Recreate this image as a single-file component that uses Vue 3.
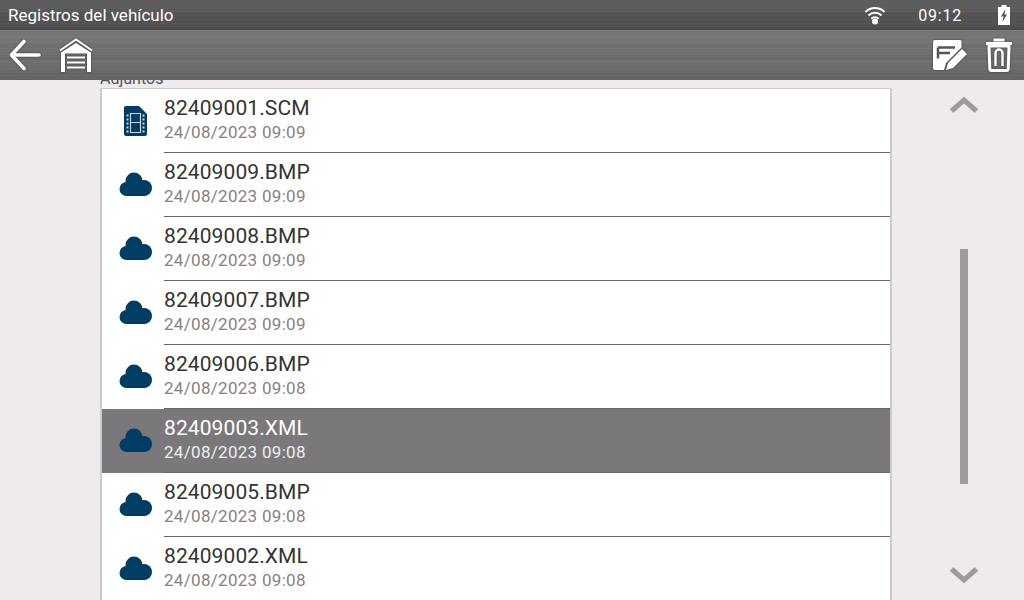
<template>
  <div class="screen">
    <header class="top">
      <div class="status" :style="{ backgroundImage: brushed(30, 0x60, 0x4c, 7) }">
        <span class="title">Registros del vehículo</span>
        <svg class="wifi" width="22" height="20" viewBox="0 0 22 20">
          <path d="M1.500 7a13.500 13.500 0 0 1 19 0M4.500 10.500a9.200 9.200 0 0 1 13 0M7.300 13.700a5.200 5.200 0 0 1 7.400 0" fill="none" stroke="#fff" stroke-width="2" />
          <circle cx="11" cy="16.500" r="3" fill="#fff" />
        </svg>
        <span class="clock">09:12</span>
        <svg class="battery" width="12" height="20" viewBox="0 0 12 20">
          <path d="M3.500 0h5v2H12v18H0V2h3.500z" fill="#fff" />
          <path d="M7.500 4 3 11.500h2.600L4.500 17 9 9.500H6.400z" fill="#555" />
        </svg>
      </div>
      <div class="toolbar" :style="{ backgroundImage: brushed(50, 0x78, 0x66, 13) }">
        <button class="tool back">
          <svg width="36" height="34" viewBox="0 0 36 34">
            <path d="M17 3.500 4.500 17 17 30.500M4.500 17H32" fill="none" stroke="#fff" stroke-width="3.600" stroke-linecap="round" stroke-linejoin="round" />
          </svg>
        </button>
        <button class="tool">
          <svg width="34" height="34" viewBox="0 0 34 34">
            <path d="M1 12.500 17 1.500l16 11" fill="none" stroke="#fff" stroke-width="2" />
            <path d="M2 34V14.500L17 5l15 9.500V34h-4V15.500H6V34z" fill="#fff" />
            <path d="M8 18.500h18v2H8zM8 23.500h18v2H8zM8 28.500h18v2H8z" fill="#fff" />
          </svg>
        </button>
        <span class="spacer"></span>
        <button class="tool note">
          <svg width="36" height="34" viewBox="0 0 36 34">
            <path d="M3 2h25a1.500 1.500 0 0 1 1.500 1.500v6L14 25l-2 7H3a2 2 0 0 1-2-2V4a2 2 0 0 1 2-2z" fill="#fff" />
            <path d="M6 9.500h17M6 9.500v11M6 15h12" fill="none" stroke="#555" stroke-width="2.500" />
            <path d="M16 25 30 11l5 5-14 14-7 2z" fill="#fff" />
          </svg>
        </button>
        <button class="tool trash">
          <svg width="28" height="34" viewBox="0 0 28 34">
            <path d="M8.500 2h11M1 5.500h26" fill="none" stroke="#fff" stroke-width="3" />
            <path d="M4 8h20l-.8 22.500a2 2 0 0 1-2 2H6.800a2 2 0 0 1-2-2z" fill="none" stroke="#fff" stroke-width="3" />
            <path d="M10.500 28V15a3.500 3.500 0 0 1 7 0v13" fill="none" stroke="#fff" stroke-width="2.400" />
          </svg>
        </button>
      </div>
    </header>

    <main class="content">
      <section class="attachments">
        <div class="caption">Adjuntos</div>
        <ul class="files">
          <li v-for="file in files" :key="file.name" class="file" :class="{ selected: file.selected }">
            <div class="icon">
              <svg v-if="file.type === 'film'" class="film" width="23" height="30" viewBox="0 0 23 30">
                <path fill="#003c64" d="M2 0h13l8 8v20a2 2 0 0 1-2 2H2a2 2 0 0 1-2-2V2a2 2 0 0 1 2-2z" />
                <path d="M6.500 7v20M16.500 7v20M6.500 7.500h10M6.500 16.500h10M6.500 26.500h10" fill="none" stroke="#c8d6e0" stroke-width="1.200" />
                <path d="M2.500 8.500h2v2h-2zM2.500 12.500h2v2h-2zM2.500 16.500h2v2h-2zM2.500 20.500h2v2h-2zM2.500 24.500h2v2h-2zM18.500 8.500h2v2h-2zM18.500 12.500h2v2h-2zM18.500 16.500h2v2h-2zM18.500 20.500h2v2h-2zM18.500 24.500h2v2h-2z" fill="#c8d6e0" />
              </svg>
              <svg v-else width="33" height="25" viewBox="0 0 33 25" fill="#003c64">
                <circle cx="7.500" cy="17" r="7" />
                <circle cx="15" cy="9" r="8.500" />
                <circle cx="25" cy="16" r="8" />
                <rect x="7" y="12" width="18" height="12" />
              </svg>
            </div>
            <div class="text">
              <div class="name">{{ file.name }}</div>
              <div class="date">{{ file.date }}</div>
            </div>
          </li>
        </ul>
      </section>
      <aside class="scroller">
        <svg class="arrow" width="30" height="18" viewBox="0 0 30 18">
          <path d="M2.500 15 15 4l12.500 11" fill="none" stroke="#9e9a9e" stroke-width="5" />
        </svg>
        <div class="track"><div class="thumb"></div></div>
        <svg class="arrow" width="30" height="18" viewBox="0 0 30 18">
          <path d="M2.500 3 15 14l12.500-11" fill="none" stroke="#9e9a9e" stroke-width="5" />
        </svg>
      </aside>
    </main>
  </div>
</template>

<script setup>
const files = [
  { name: '82409001.SCM', date: '24/08/2023 09:09', type: 'film' },
  { name: '82409009.BMP', date: '24/08/2023 09:09', type: 'cloud' },
  { name: '82409008.BMP', date: '24/08/2023 09:09', type: 'cloud' },
  { name: '82409007.BMP', date: '24/08/2023 09:09', type: 'cloud' },
  { name: '82409006.BMP', date: '24/08/2023 09:08', type: 'cloud' },
  { name: '82409003.XML', date: '24/08/2023 09:08', type: 'cloud', selected: true },
  { name: '82409005.BMP', date: '24/08/2023 09:08', type: 'cloud' },
  { name: '82409002.XML', date: '24/08/2023 09:08', type: 'cloud' },
]

// horizontal brushed metal stripes, one per pixel row
const brushed = (rows, from, to, seed) => {
  let n = seed
  const stops = []
  for (let y = 0; y < rows; y++) {
    n = (n * 16807) % 2147483647
    const base = from + ((to - from) * y) / rows
    const g = Math.round(base + (n % 9) - 4)
    stops.push(`rgb(${g},${g},${g}) ${y}px ${y + 1}px`)
  }
  return `linear-gradient(180deg, ${stops.join(',')})`
}
</script>

<style scoped>
.screen {
  width: 1024px;
  height: 600px;
  overflow: hidden;
  background: #efeaee;
  font-family: Roboto, "Liberation Sans", sans-serif;
  display: flex;
  flex-direction: column;
}

.top {
  position: relative;
  z-index: 2;
  flex: none;
}

.status {
  height: 30px;
  display: flex;
  align-items: center;
  padding: 0 14px 0 8px;
  color: #fff;
  font-size: 17px;
}

.title {
  flex: 1;
}

.clock {
  margin: 0 36px 0 32px;
  font-size: 16px;
  letter-spacing: 0.8px;
}

.toolbar {
  height: 50px;
  display: flex;
  align-items: center;
  padding: 0 11px 0 7px;
}

.tool {
  background: none;
  border: none;
  padding: 0;
  display: flex;
  margin-right: 16px;
}

.tool svg {
  filter: drop-shadow(0 0 1px rgba(0, 0, 0, 0.45));
}

.tool.note {
  margin-right: 17px;
}

.tool.trash {
  margin-right: 0;
}

.spacer {
  flex: 1;
}

.content {
  flex: 1;
  display: flex;
  min-height: 0;
}

.attachments {
  width: 792px;
  margin-left: 100px;
  margin-top: -10px;
}

.caption {
  height: 18px;
  line-height: 18px;
  font-size: 16px;
  color: #555;
}

.files {
  list-style: none;
  margin: 0;
  padding: 0;
  background: #fff;
  border: 2px solid #ccc;
  border-bottom: none;
  border-top-width: 1px;
}

.file {
  position: relative;
  height: 64px;
  display: flex;
  color: #333;
}

.file::after {
  content: "";
  position: absolute;
  left: 62px;
  right: 0;
  bottom: 0;
  height: 1px;
  background: #6b686b;
}

.file.selected {
  background: #7a787b;
  color: #fff;
}

.icon {
  width: 62px;
  height: 63px;
  flex: none;
  display: flex;
  align-items: center;
  padding-left: 17px;
  box-sizing: border-box;
}

.film {
  margin-left: 5px;
}

.text {
  padding-top: 6px;
}

.name {
  font-size: 21px;
  line-height: 26px;
  letter-spacing: 0.1px;
}

.date {
  font-size: 17px;
  line-height: 22px;
  letter-spacing: 0.3px;
  color: #858285;
}

.selected .date {
  color: #eee;
}

.scroller {
  flex: 1;
  display: flex;
  flex-direction: column;
  align-items: center;
  padding: 16px 0;
  margin-left: 12px;
}

.arrow {
  flex: none;
}

.track {
  flex: 1;
  padding-top: 135px;
}

.thumb {
  width: 8px;
  height: 235px;
  background: #9e9a9e;
}
</style>

<style>
html,
body {
  margin: 0;
  background: #efeaee;
}
</style>
